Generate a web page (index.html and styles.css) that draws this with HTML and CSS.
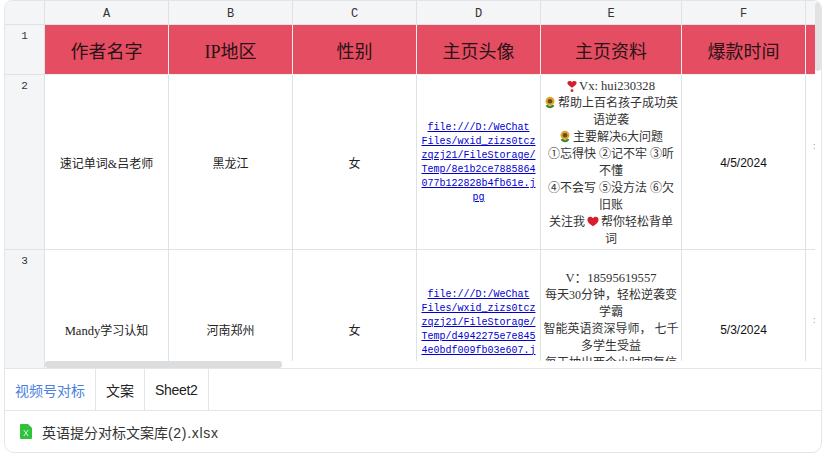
FILE: index.html
```html
<!DOCTYPE html>
<html lang="zh">
<head>
  <meta charset="UTF-8" />
  <title>英语提分对标文案库(2).xlsx</title>
  <link rel="stylesheet" href="styles.css">
</head>
<body>
  <div class="card">
    <div class="sheet">
      <table>
        <colgroup>
          <col class="col-index">
          <col class="col-std">
          <col class="col-std">
          <col class="col-std">
          <col class="col-std">
          <col class="col-wide">
          <col class="col-std">
          <col class="col-std">
        </colgroup>
        <tr class="row-letters">
          <th class="corner"></th>
          <th>A</th><th>B</th><th>C</th><th>D</th><th>E</th><th>F</th><th></th>
        </tr>
        <tr class="row-title">
          <th class="index">1</th>
          <td>作者名字</td><td>IP地区</td><td>性别</td><td>主页头像</td><td>主页资料</td><td>爆款时间</td><td></td>
        </tr>
        <tr class="row-first">
          <th class="index">2</th>
          <td>速记单词&amp;吕老师</td>
          <td>黑龙江</td>
          <td>女</td>
          <td class="link"><a href="#">file:///D:/WeChat Files/wxid_zizs0tczzqzj21/FileStorage/Temp/8e1b2ce7885864077b122828b4fb61e.jpg</a></td>
          <td class="info">
            <svg class="emoji emoji-drop" viewBox="0 0 12 14"><path d="M6 8.500C2 6 .5 4.500.5 2.800.5 1.300 1.600.4 3 .4c1.300 0 2.400.6 3 1.600C6.600 1 7.700.4 9 .4c1.400 0 2.500.9 2.500 2.400C11.500 4.500 10 6 6 8.500z" fill="#d81e2c"/><circle cx="6" cy="12" r="1.700" fill="#d81e2c"/></svg><span class="lat">Vx: hui230328</span><br>
            <svg class="emoji" viewBox="0 0 14 14"><path d="M2 10.500c1.800-1 3.600-.6 5 .8 1.400-1.400 3.200-1.800 5-.8-.8 2.300-2.800 3.200-5 3.200s-4.200-.9-5-3.200z" fill="#3c8a32"/><circle cx="7" cy="5.500" r="5.200" fill="#dfa52a"/><circle cx="7" cy="5.500" r="2.700" fill="#6a4a20"/></svg>帮助上百名孩子成功英语逆袭<br>
            <svg class="emoji" viewBox="0 0 14 14"><path d="M2 10.500c1.800-1 3.600-.6 5 .8 1.400-1.400 3.200-1.800 5-.8-.8 2.300-2.800 3.200-5 3.200s-4.200-.9-5-3.200z" fill="#3c8a32"/><circle cx="7" cy="5.500" r="5.200" fill="#dfa52a"/><circle cx="7" cy="5.500" r="2.700" fill="#6a4a20"/></svg>主要解决6大问题<br>
            ①忘得快 ②记不牢 ③听不懂<br>
            ④不会写 ⑤没方法 ⑥欠旧账<br>
            关注我<svg class="emoji emoji-heart" viewBox="0 0 14 12"><path d="M7 11.600C2.500 8.500.5 6.500.5 3.900.5 1.900 2 .5 3.900.5 5.200.5 6.300 1.200 7 2.300 7.700 1.200 8.800.5 10.100.5 12 .5 13.500 1.900 13.500 3.900c0 2.600-2 4.600-6.500 7.700z" fill="#d81e2c"/></svg>帮你轻松背单词
          </td>
          <td class="date">4/5/2024</td>
          <td class="cut">:</td>
        </tr>
        <tr class="row-second">
          <th class="index">3</th>
          <td><span class="lat">Mandy</span>学习认知</td>
          <td>河南郑州</td>
          <td>女</td>
          <td class="link"><a href="#">file:///D:/WeChat Files/wxid_zizs0tczzqzj21/FileStorage/Temp/d4942275e7e8454e0bdf009fb03e607.jpg</a></td>
          <td class="info">
            <span class="lat">V：18595619557</span><br>
            每天30分钟，轻松逆袭变学霸<br>
            智能英语资深导师， 七千多学生受益<br>
            每天抽出两个小时回复信息
          </td>
          <td class="date">5/3/2024</td>
          <td class="cut">:</td>
        </tr>
      </table>
      <div class="vbar"></div>
      <div class="hbar"><div class="hthumb"></div></div>
    </div>

    <div class="tabs">
      <div class="tab active">视频号对标</div>
      <div class="tab">文案</div>
      <div class="tab tab-latin">Sheet2</div>
    </div>

    <div class="file">
      <svg class="file-icon" viewBox="0 0 12 15"><path d="M0 1a1 1 0 0 1 1-1h7l4 4v10a1 1 0 0 1-1 1H1a1 1 0 0 1-1-1z" fill="#2fc23d"/><path d="M3.800 6l4.400 6M8.200 6l-4.400 6" stroke="#d6f5d9" stroke-width="1"/></svg>
      <span>英语提分对标文案库<span class="file-ext">(2).xlsx</span></span>
    </div>
  </div>
</body>
</html>
```

FILE: styles.css
```css
* {
  box-sizing: border-box;
}

body {
  margin: 0;
  padding: 0 0 0 4px;
  background-color: white;
  font-family: "Liberation Sans", "Noto Sans CJK SC", sans-serif;
}

.card {
  width: 818px;
  height: 453px;
  border: 1px solid #e3e5e8;
  border-radius: 8px 8px 10px 10px;
  overflow: hidden;
  display: flex;
  flex-direction: column;
}

.sheet {
  position: relative;
  height: 367px;
  overflow: hidden;
  flex-shrink: 0;
}

table {
  table-layout: fixed;
  width: 840px;
  border-collapse: separate;
  border-spacing: 0;
  color: #222;
  font-family: "Liberation Serif", "Noto Sans CJK SC", serif;
}

.col-index { width: 40px; }
.col-std { width: 124px; }
.col-wide { width: 141px; }

th, td {
  border-right: 1px solid #dfe1e5;
  border-bottom: 1px solid #dfe1e5;
  text-align: center;
  padding: 0 4px;
  font-weight: normal;
}

.row-letters { height: 24px; }
.row-title { height: 50px; }
.row-first { height: 175px; }
.row-second { height: 158px; }

.row-letters th {
  background-color: #f4f5f7;
  padding-top: 2px;
  font-family: "Liberation Mono", monospace;
  font-size: 12px;
  color: #333;
}

.row-title .index, .row-first .index, .row-second .index {
  background-color: #f4f5f7;
  vertical-align: top;
  padding-top: 5px;
  font-family: "Liberation Mono", monospace;
  font-size: 11px;
  color: #333;
}

.row-title td {
  background-color: #e54e62;
  font-size: 18px;
  color: #2a1216;
  border-color: #eef0f2;
}

.row-first td, .row-second td {
  font-size: 12px;
  padding-top: 2px;
}

.lat {
  font-size: 12.6px;
}

.row-first td.info, .row-second td.info {
  line-height: 17px;
  color: #333;
  padding: 2px 2.5px 0;
}

.emoji {
  width: 12px;
  height: 13px;
  vertical-align: -2px;
  margin-right: 2px;
}

.emoji-drop {
  width: 10px;
  height: 13px;
  vertical-align: -3px;
}

.emoji-heart {
  height: 11px;
  vertical-align: -1px;
  margin-left: 2px;
}

.row-first td.link, .row-second td.link {
  font-family: "Liberation Mono", monospace;
  font-size: 10px;
  line-height: 14px;
  overflow-wrap: anywhere;
}

td.link a {
  color: #0000d0;
}

.row-first td.date, .row-second td.date {
  font-family: "Liberation Sans", sans-serif;
  font-size: 12px;
  color: #111;
}

.row-first td.cut, .row-second td.cut {
  text-align: left;
  padding: 0 0 34px 7px;
  color: #999;
  font-size: 10px;
}

.row-second td.cut {
  padding-bottom: 18px;
}

.vbar {
  position: absolute;
  top: 0;
  right: 0;
  bottom: 0;
  width: 6px;
  background-color: white;
}

.vbar::before {
  content: "";
  display: block;
  margin-top: 1px;
  height: 69px;
  background-color: #e1e2e4;
  border-radius: 3px;
}

.hbar {
  position: absolute;
  left: 40px;
  right: 0;
  bottom: 0;
  height: 7px;
  background-color: white;
}

.hthumb {
  width: 237px;
  height: 7px;
  background-color: #dcdddf;
  border-radius: 3px;
}

.tabs {
  display: flex;
  height: 43px;
  border-top: 1px solid #e3e5e8;
  border-bottom: 1px solid #e3e5e8;
  font-size: 14px;
  color: #222;
  flex-shrink: 0;
}

.tab {
  display: flex;
  align-items: center;
  padding: 0 10px;
  border-right: 1px solid #e3e5e8;
}

.tab-latin {
  letter-spacing: -0.3px;
}

.active {
  color: #4a7fe0;
}

.file {
  flex: 1;
  display: flex;
  align-items: center;
  gap: 10px;
  padding-left: 15px;
  font-size: 14px;
  color: #333;
}

.file-ext {
  letter-spacing: 0.7px;
}

.file-icon {
  width: 12px;
  height: 15px;
}
```
